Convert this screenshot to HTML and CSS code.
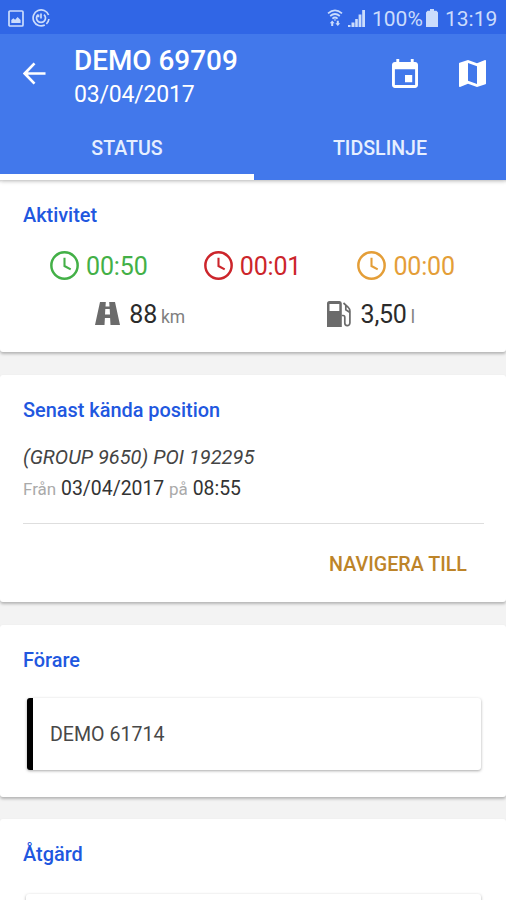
FILE: index.html
```html
<!DOCTYPE html>
<html lang="sv">
<head>
<meta charset="utf-8">
<title>DEMO 69709</title>
<link rel="stylesheet" href="styles.css">
</head>
<body>
<div class="screen">
  <header class="header">
    <div class="statusbar">
      <svg class="sb-image" viewBox="0 0 16 17"><rect x="1" y="1" width="14" height="15" rx="1" fill="none" stroke="currentColor" stroke-width="1.7"/><path d="M3.3 13V10l2-1.8 1.8 1.5L9.6 7l3 3v3z" fill="currentColor"/></svg>
      <svg class="sb-sync" viewBox="0 0 18 18" fill="none" stroke="currentColor"><path d="M16.600 6A8 8 0 1 0 12.800 16M14.400 15a8 8 0 0 0 2.500-5" stroke-width="1.700"/><path d="M6 5.600a4.500 4.500 0 1 0 6 0M9 4.500v5M6.500 5.600v2.600" stroke-width="1.700"/></svg>
      <div class="sb-right">
        <svg class="sb-wifi" viewBox="0 0 16 18"><path d="M1 4.400Q8-1.500 15 4.400M3.200 7Q8 3 12.800 7M5.400 9.600Q8 7.400 10.600 9.600" fill="none" stroke="currentColor" stroke-width="1.700"/><path d="M6.600 10.500h2.800L8 12zM5.200 11.500 7.600 14.300H6.200V17H4.200v-2.700H2.800zM10.800 17l2.400-2.800h-1.400v-2.400H9.800v2.400H8.400z" fill="currentColor"/></svg>
        <svg class="sb-signal" viewBox="0 0 18 18" fill="currentColor"><path d="M0 18v-2h2.500v2zM3.500 18v-4.500H6.500V18zM7.200 18V10h2.600v8zM10.600 18V5.500h2.800V18zM14.200 18V1H17v17z"/></svg>
        <span class="sb-percent">100%</span>
        <svg class="sb-battery" viewBox="0 0 12 18" fill="currentColor"><path d="M4 0h4v1.800h2.500L12 3.500V18H0V3.500L1.500 1.800H4z"/></svg>
        <span class="sb-time">13:19</span>
      </div>
    </div>
    <div class="appbar">
      <svg class="back" viewBox="0 0 24 24" fill="none" stroke="currentColor" stroke-width="2.800"><path d="M23.500 12H2.500M12 1.500 1.800 12 12 22.500"/></svg>
      <div class="heading">
        <h1 class="heading-title">DEMO 69709</h1>
        <div class="heading-date">03/04/2017</div>
      </div>
      <svg class="calendar" viewBox="3 1 18 20" preserveAspectRatio="none" fill="currentColor"><path d="M17 12h-5v5h5v-5zM16 1v2H8V1H6v2H5c-1.110 0-1.990.9-1.990 2L3 19c0 1.100.89 2 2 2h14c1.100 0 2-.9 2-2V5c0-1.100-.9-2-2-2h-1V1h-2zm3 18H5V8h14v11z"/></svg>
      <svg class="map" viewBox="3 3 18 18" fill="currentColor"><path d="M20.500 3l-.16.03L15 5.100 9 3 3.360 4.900c-.21.07-.36.25-.36.480V20.500c0 .28.22.5.5.5l.16-.03L9 18.900l6 2.100 5.640-1.900c.21-.07.36-.25.36-.480V3.500c0-.28-.22-.5-.5-.5zM15 19l-6-2.110V5l6 2.110V19z"/></svg>
    </div>
    <nav class="tabs">
      <div class="tab tab-active">STATUS</div>
      <div class="tab">TIDSLINJE</div>
    </nav>
  </header>

  <main class="content">
    <section class="card card-activity">
      <h2 class="card-title">Aktivitet</h2>
      <div class="times">
        <div class="time green"><svg class="clock" viewBox="0 0 28 28" fill="none" stroke="currentColor" stroke-width="2.400"><circle cx="14" cy="14" r="12.700"/><path d="M14 6.500V14.500L20 17.800" stroke-width="2"/></svg><span>00:50</span></div>
        <div class="time red"><svg class="clock" viewBox="0 0 28 28" fill="none" stroke="currentColor" stroke-width="2.400"><circle cx="14" cy="14" r="12.700"/><path d="M14 6.500V14.500L20 17.800" stroke-width="2"/></svg><span>00:01</span></div>
        <div class="time orange"><svg class="clock" viewBox="0 0 28 28" fill="none" stroke="currentColor" stroke-width="2.400"><circle cx="14" cy="14" r="12.700"/><path d="M14 6.500V14.500L20 17.800" stroke-width="2"/></svg><span>00:00</span></div>
      </div>
      <div class="totals">
        <div class="total">
          <svg class="road" viewBox="0 0 25 23" fill="currentColor"><path fill-rule="evenodd" d="M5 0h5.800l-.3 4.500h4L14.200 0H20l5 23H15.500l-.4-7H9.900l-.4 7H0zM10.300 7l-.3 5.500h5L14.700 7z"/></svg>
          <span class="num">88</span><span class="unit">km</span>
        </div>
        <div class="total">
          <svg class="fuel" viewBox="0 0 25 26"><path fill="currentColor" fill-rule="evenodd" d="M2.500 0h10Q14.800 0 14.800 2.500V26H0V2.500Q0 0 2.500 0zM2.500 3v7h9.800V3z"/><path d="M14.800 14.500h1.400Q17.800 14.500 17.800 16.500V22q0 2.600 2.400 2.600T22.900 22V10Q23 8 21 6L16.500 2M18.800 4.500v4.300l3.800 2.400" fill="none" stroke="currentColor" stroke-width="1.700"/></svg>
          <span class="num">3,50</span><span class="unit">l</span>
        </div>
      </div>
    </section>

    <section class="card card-position">
      <h2 class="card-title">Senast kända position</h2>
      <div class="place">(GROUP 9650) POI 192295</div>
      <div class="since"><span class="muted">Från</span> <span class="value">03/04/2017</span> <span class="muted">på</span> <span class="value">08:55</span></div>
      <div class="actions"><span class="action">NAVIGERA TILL</span></div>
    </section>

    <section class="card card-driver">
      <h2 class="card-title">Förare</h2>
      <div class="entry">DEMO 61714</div>
    </section>

    <section class="card card-action">
      <h2 class="card-title">Åtgärd</h2>
      <div class="entry entry-plain"></div>
    </section>
  </main>
</div>
</body>
</html>
```
FILE: styles.css
```css
* { box-sizing: border-box; }
body { margin: 0; font-family: Roboto, "Liberation Sans", sans-serif; background: #f3f3f3; }
svg { display: block; flex: none; }
h1, h2 { margin: 0; font-weight: 500; }
.screen { width: 506px; height: 900px; overflow: hidden; display: flex; flex-direction: column; }

.header { flex: none; height: 180px; background: #4278eb; color: #fff; box-shadow: 0 1px 4px rgba(0,0,0,.3); position: relative; z-index: 1; }
.statusbar { height: 34px; background: #3066e6; color: #cbdcfc; display: flex; align-items: center; padding: 2px 8px 0; }
.sb-image { width: 16px; height: 17px; }
.sb-sync { width: 18px; height: 18px; margin-left: 8px; }
.sb-right { margin-left: auto; display: flex; align-items: center; }
.sb-wifi { width: 16px; height: 18px; margin-right: 5px; }
.sb-signal { width: 18px; height: 18px; }
.sb-percent { width: 52px; margin-left: 6px; font-size: 21px; line-height: 24px; padding-top: 1px; white-space: nowrap; }
.sb-battery { width: 12px; height: 18px; margin-left: 2px; }
.sb-time { width: 53px; margin-left: 7px; font-size: 21px; line-height: 24px; padding-top: 1px; white-space: nowrap; }

.appbar { height: 80px; display: flex; padding: 0 20px 0 23px; align-items: center; }
.back { width: 23px; height: 23px; margin-top: -1px; }
.heading { flex: 1; padding: 6px 0 0 28px; }
.heading-title { font-size: 27.900px; line-height: 34px; white-space: nowrap; }
.heading-date { font-size: 23px; letter-spacing: -.2px; line-height: 33px; white-space: nowrap; }
.calendar { width: 26px; height: 29px; margin: -2px 41px 0 0; }
.map { width: 27px; height: 27px; margin-top: -1px; }

.tabs { display: grid; grid-template-columns: 254px 252px; height: 66px; }
.tab { display: flex; align-items: center; justify-content: center; font-size: 19.600px; font-weight: 500; color: #e6efff; border-bottom: 6px solid transparent; padding-top: 9px; }
.tab-active { border-color: #fff; }

.content { flex: 1; min-height: 0; display: flex; flex-direction: column; gap: 23px; }
.card { flex: none; background: #fff; border-radius: 3px; padding: 24px 22px 0 23px; box-shadow: 0 2px 3px rgba(0,0,0,.26); }
.card-title { font-size: 19.900px; line-height: 24px; color: #2157df; }
.card-activity { height: 172px; }
.card-position { height: 227px; }
.card-driver { height: 172px; }
.card-action { height: 90px; margin-top: -1px; }

.times { display: grid; grid-template-columns: repeat(3, 1fr); margin-top: 22px; }
.time { display: flex; align-items: center; justify-content: center; gap: 7px; height: 32px; font-size: 25px; letter-spacing: -.15px; padding-right: 2px; }
.clock { width: 29px; height: 29px; margin-top: -1px; }
.green { color: #43b047; }
.red { color: #cc252b; }
.orange { color: #e49e38; }
.totals { display: grid; grid-template-columns: 1fr 1fr; margin-top: 17px; }
.total { display: flex; align-items: baseline; justify-content: center; height: 32px; line-height: 32px; padding-left: 4px; }
.num { font-size: 25px; letter-spacing: -.25px; color: #2b2b2b; margin-left: 9px; }
.unit { font-size: 17.500px; color: #808080; margin-left: 4px; }
.road { width: 25px; height: 23px; color: #6b6b6b; align-self: center; margin-top: -3px; }
.fuel { width: 25px; height: 26px; color: #6b6b6b; align-self: center; margin-top: -3px; }

.place { margin-top: 18px; font-size: 20px; line-height: 32px; font-style: italic; color: #444; white-space: nowrap; }
.since { font-size: 19.400px; line-height: 31px; color: #333; white-space: nowrap; }
.muted { font-size: 17px; color: #aaa; }
.actions { margin-top: 18px; border-top: 1px solid #dedede; height: 81px; display: flex; justify-content: flex-end; align-items: center; padding-right: 17px; }
.action { font-size: 19.700px; font-weight: 500; color: #bd8429; white-space: nowrap; }

.entry { margin: 25px 3px 0 4px; height: 72px; border-left: 6px solid #000; border-radius: 3px; box-shadow: 0 1px 3px rgba(0,0,0,.34); background: #fff; display: flex; align-items: center; padding-left: 17px; font-size: 19.600px; color: #484848; }
.entry-plain { border-left: 0; margin-top: 27px; margin-left: 3px; }
```
